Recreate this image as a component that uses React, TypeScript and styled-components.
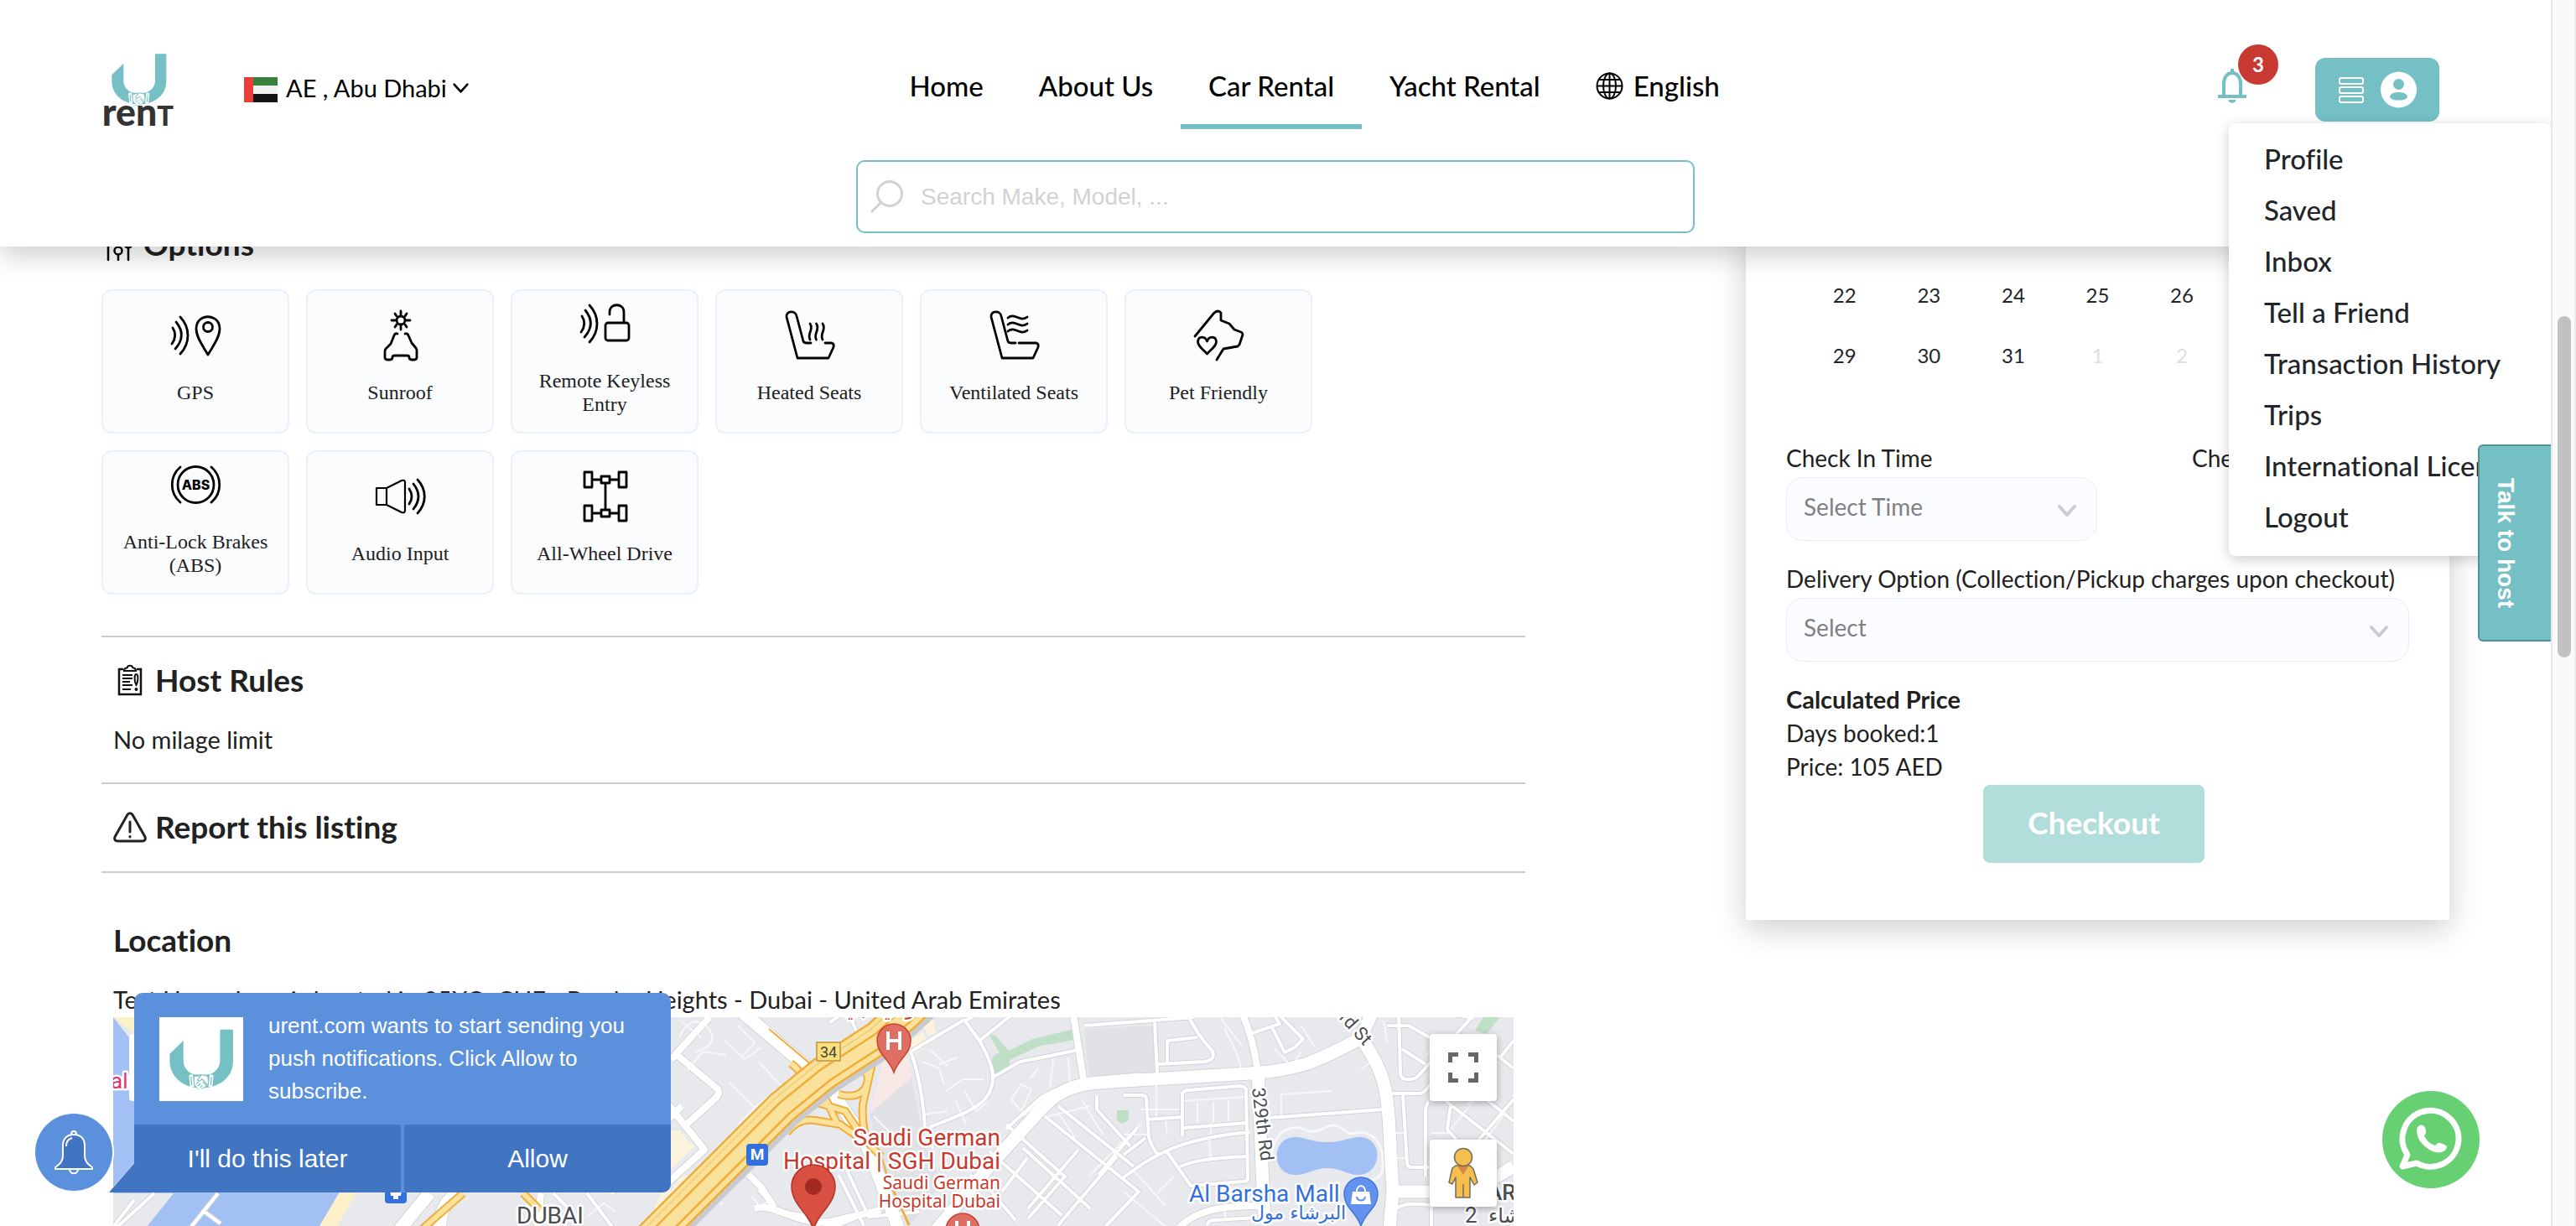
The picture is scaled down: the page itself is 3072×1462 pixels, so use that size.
import React from "react";
import styled, { createGlobalStyle, css } from "styled-components";

const teal = "#74c0c4";
const brandFont = `Lato, "Noto Sans", sans-serif`;
const plainFont = `"Liberation Sans", Arial, sans-serif`;

const GlobalStyle = createGlobalStyle`
  * { box-sizing: border-box; }
  body { margin: 0; background: #fff; color: #212121; font-family: ${brandFont}; font-variant-ligatures: none; }
  button, input, select { font: inherit; color: inherit; margin: 0; }
  h2, p, ul, table { margin: 0; padding: 0; }
  svg { display: block; }
`;

/* ---------- frame ---------- */

const Frame = styled.div`
  display: grid;
  grid-template-columns: minmax(0, 1fr) 30px;
  height: 100vh;
  overflow: hidden;
`;

const Page = styled.div`
  position: relative;
  overflow: hidden;
`;

const ScrollTrack = styled.div`
  background: #fafafa;
  border-left: 2px solid #e8e8e8;
  border-right: 2px solid #ececec;
  padding: 377px 4px 0 6px;
`;

const ScrollThumb = styled.div`
  height: 407px;
  border-radius: 8px;
  background: #c1c1c1;
`;

/* ---------- header ---------- */

const Header = styled.header`
  position: absolute;
  inset: 0 0 auto 0;
  z-index: 2;
  padding: 60px 133px 16px 123px;
  background: #fff;
  box-shadow: 0 10px 30px rgba(0, 0, 0, 0.2);
`;

const HeaderRow = styled.div`
  display: grid;
  grid-template-columns: 9fr auto 8fr;
  align-items: center;
  height: 94px;
`;

const Brand = styled.div`
  display: flex;
  align-items: center;
  gap: 82px;
`;

const BrandLink = styled.a`
  display: block;
  svg { overflow: visible; }
`;

const PlaceButton = styled.button`
  display: flex;
  align-items: center;
  gap: 10px;
  padding: 0;
  border: 0;
  background: none;
  color: #000;
  font-size: 29px;
  line-height: 40px;
`;

const Place = styled.span`
  display: flex;
  align-items: center;
  gap: 6px;
  padding-bottom: 4px;
`;

const Nav = styled.nav`
  display: flex;
`;

const NavLink = styled.a<{ $active?: boolean }>`
  display: flex;
  align-items: center;
  gap: 12px;
  height: 94px;
  padding: 0 33px 4px;
  border-bottom: 6px solid ${(p) => (p.$active ? teal : "transparent")};
  color: #000;
  font-size: 33px;
  font-weight: 500;
  text-decoration: none;
  white-space: nowrap;
`;

const Account = styled.div`
  display: flex;
  align-items: center;
  justify-content: flex-end;
  gap: 82px;
`;

const BellButton = styled.button`
  position: relative;
  margin-bottom: 10px;
  padding: 0;
  border: 0;
  background: none;
`;

const Count = styled.span`
  position: absolute;
  left: 24px;
  top: -28px;
  width: 48px;
  height: 48px;
  border-radius: 50%;
  background: #c83a31;
  color: #fff;
  font-size: 24px;
  font-weight: 700;
  line-height: 48px;
  text-align: center;
`;

const AccountButton = styled.button`
  display: flex;
  align-items: center;
  justify-content: center;
  gap: 20px;
  width: 148px;
  height: 76px;
  border: 0;
  border-radius: 12px;
  background: ${teal};
`;

const SearchBox = styled.form`
  display: flex;
  align-items: center;
  gap: 18px;
  width: 1000px;
  height: 87px;
  margin: 37px 0 0 898px;
  padding: 0 14px;
  border: 2px solid ${teal};
  border-radius: 10px;
  font-family: ${plainFont};
`;

const SearchInput = styled.input`
  flex: 1;
  border: 0;
  outline: 0;
  background: none;
  font-size: 28px;
  line-height: 40px;
  &::placeholder { color: #d2d2d2; opacity: 1; }
`;

const Menu = styled.ul`
  position: absolute;
  top: 147px;
  right: 0;
  width: 384px;
  padding: 12px 0 16px;
  border-radius: 8px;
  background: #fff;
  box-shadow: 0 4px 16px rgba(0, 0, 0, 0.2);
  list-style: none;
`;

const MenuLink = styled.a`
  display: block;
  padding: 0 42px;
  color: #212529;
  font-size: 33px;
  font-weight: 500;
  line-height: 61px;
  text-decoration: none;
  white-space: nowrap;
`;

/* ---------- content ---------- */

const Main = styled.main`
  display: grid;
  grid-template-columns: minmax(0, 1698fr) minmax(0, 839fr);
  column-gap: 263px;
  align-items: start;
  padding: 269px 121px 0;
`;

const Heading = styled.h2`
  display: flex;
  align-items: center;
  gap: 10px;
  font-size: 37px;
  font-weight: 700;
  line-height: 44px;
`;

const OptionGrid = styled.ul`
  display: grid;
  grid-template-columns: repeat(6, 224px);
  grid-auto-rows: 172px;
  gap: 20px;
  margin: 32px 0 49px;
  list-style: none;
`;

const OptionCard = styled.li`
  display: flex;
  flex-direction: column;
  align-items: center;
  justify-content: center;
  gap: 24px;
  padding: 0 20px 10px;
  border: 2px solid #eceffe;
  border-radius: 12px;
  background: #fbfcfe;
  font-family: "Liberation Serif", "Times New Roman", serif;
  font-size: 24px;
  line-height: 28px;
  text-align: center;
`;

const OptionIcon = styled.svg`
  flex: none;
  width: 60px;
  height: 60px;
  overflow: visible;
`;

const Section = styled.section<{ $last?: boolean }>`
  padding: ${(p) => (p.$last ? "58px" : "29px")} 14px 31px;
  border-top: 2px solid #ccc;
`;

const Text = styled.p`
  margin-top: 29px;
  font-size: 29px;
  line-height: 40px;
`;

const MapBox = styled.div`
  position: relative;
  height: 400px;
  margin-top: 1px;
  overflow: hidden;
  background: #e8e9ed;
`;

const MapControls = styled.div`
  position: absolute;
  top: 20px;
  right: 20px;
  display: grid;
  gap: 46px;
`;

const MapButton = styled.button`
  display: grid;
  place-items: center;
  width: 80px;
  height: 80px;
  padding: 0;
  border: 0;
  border-radius: 4px;
  background: #fff;
  box-shadow: 0 2px 8px rgba(0, 0, 0, 0.3);
`;

/* ---------- booking ---------- */

const Booking = styled.aside`
  padding: 46px 48px 68px;
  background: #fff;
  box-shadow: 0 10px 36px rgba(0, 0, 0, 0.2);
`;

const Calendar = styled.table`
  width: 704px;
  margin: 0 auto;
  border-collapse: collapse;
  table-layout: fixed;
  color: #212529;
  font-size: 24px;
`;

const Day = styled.td<{ $muted?: boolean }>`
  height: 72px;
  padding: 0;
  text-align: center;
  ${(p) => p.$muted && css`color: #dadfe3;`}
`;

const TimeRow = styled.div`
  display: grid;
  grid-template-columns: 371px 1fr;
  column-gap: 113px;
  margin-top: 67px;
`;

const Field = styled.div`
  display: grid;
  gap: 3px;
  font-size: 28px;
`;

const DeliveryField = styled(Field)`
  margin-top: 25px;
`;

const Label = styled.label`
  line-height: 40px;
  white-space: nowrap;
`;

const SelectWrap = styled.div`
  position: relative;
  svg { position: absolute; right: 24px; top: 32px; pointer-events: none; }
`;

const Select = styled.select`
  display: block;
  width: 100%;
  height: 76px;
  padding: 0 20px 6px;
  appearance: none;
  border: 1px solid #e9ecfb;
  border-radius: 20px;
  background: #fbfcff;
  color: #808080;
`;

const Price = styled.div`
  margin-top: 25px;
  font-size: 28px;
  line-height: 40px;
`;

const PriceTitle = styled.strong`
  font-size: 29px;
`;

const Checkout = styled.button`
  display: block;
  width: 264px;
  height: 93px;
  margin: 2px 0 0 235px;
  padding: 0 0 4px;
  border: 0;
  border-radius: 8px;
  background: #b1dedb;
  color: #fff;
  font-size: 37px;
  font-weight: 700;
`;

/* ---------- floating parts ---------- */

const TalkButton = styled.button`
  position: absolute;
  z-index: 3;
  top: 530px;
  right: 0;
  width: 87px;
  height: 235px;
  padding: 0 24px 0 0;
  border: 2px solid #4c9496;
  border-right: 0;
  border-radius: 6px 0 0 6px;
  background: ${teal};
  color: #fff;
  font-family: ${plainFont};
  font-size: 28px;
  font-weight: 700;
  writing-mode: vertical-rl;
  text-align: center;
`;

const WhatsApp = styled.a`
  position: absolute;
  z-index: 3;
  right: 85px;
  bottom: 45px;
`;

const PushBell = styled.button`
  position: absolute;
  z-index: 3;
  left: 42px;
  bottom: 42px;
  width: 92px;
  height: 92px;
  display: grid;
  place-items: center;
  padding: 0;
  border: 0;
  border-radius: 50%;
  background: #5b90dc;
  box-shadow: 0 0 0 2px #fff;
`;

const Push = styled.div`
  position: absolute;
  z-index: 3;
  left: 160px;
  bottom: 40px;
  width: 640px;
  border-radius: 10px 10px 10px 0;
  background: #5b90dc;
  color: #fff;
  font-family: ${plainFont};
`;

const PushTail = styled.svg`
  position: absolute;
  left: -30px;
  bottom: 0;
`;

const PushBody = styled.div`
  display: flex;
  gap: 30px;
  height: 157px;
  padding: 20px 30px 0;
  font-size: 26px;
  line-height: 39px;
`;

const PushLogo = styled.div`
  display: grid;
  place-items: center;
  flex: none;
  width: 100px;
  height: 100px;
  margin-top: 9px;
  background: #fff;
`;

const PushActions = styled.div`
  display: grid;
  grid-template-columns: 1fr 1fr;
  gap: 4px;
`;

const PushAction = styled.button<{ $end?: boolean }>`
  height: 81px;
  padding: 0;
  border: 0;
  border-radius: ${(p) => (p.$end ? "4px 0 10px 4px" : "0 4px 4px 0")};
  background: #4175c1;
  font-size: 30px;
`;

/* ---------- drawings ---------- */

const UMark = () => (
  <g>
    <path
      fill={teal}
      d="M97 62 L55 103 V125 C55 175 98 208 152 208 C208 208 250 175 250 125 V28 H210 V122 C210 146 194 163 172 167 H134 C112 163 97 146 97 122Z"
    />
    <path fill="#fff" d="M114 168l12-2 4 38-12 3zM190 168l-12-2-4 38 12 3z" />
    <path fill={teal} d="M119 173l3 0 2 26-3 1zM185 173l-3 0-2 26 3 1z" />
    <path
      fill="#fff"
      stroke={teal}
      strokeWidth="2"
      d="M130 172l14-1 8-4 20 5 2 26-8 4-4 5-6 1-8 6-8-5-10-14z"
    />
    <path
      fill="none"
      stroke={teal}
      strokeWidth="3"
      strokeLinecap="round"
      d="M152 168l-12 16c5 4 10 2 14-4l18 18M138 194l6-5M142 201l7-7M149 206l6-6M158 190l10 10"
    />
  </g>
);

const Logo = () => (
  <svg width="86" height="86" viewBox="24 27 258 258" role="img" aria-label="U rent">
    <UMark />
    <text x="20" y="284" fill="#333" fontFamily={brandFont} fontWeight="900" fontSize="134">
      ren<tspan fontSize="98">T</tspan>
    </text>
  </svg>
);

const Flag = () => (
  <svg width="40" height="30" viewBox="0 0 40 30">
    <path fill="#37803c" d="M0 0h40v10H0z" />
    <path fill="#f2f2f2" d="M0 10h40v10H0z" />
    <path fill="#141414" d="M0 20h40v10H0z" />
    <path fill="#ed3d38" d="M0 0h11v30H0z" />
  </svg>
);

const Chevron = ({ size, color, weight }: { size: number; color: string; weight: number }) => (
  <svg width={size} height={(size * 2) / 3} viewBox="0 0 24 16" fill="none" stroke={color} strokeWidth={weight} strokeLinecap="round" strokeLinejoin="round">
    <path d="M3 3l9 10 9-10" />
  </svg>
);

const Globe = () => (
  <svg width="33" height="33" viewBox="0 0 33 33" fill="none" stroke="#000" strokeWidth="2">
    <circle cx="16.500" cy="16.500" r="15" />
    <ellipse cx="16.500" cy="16.500" rx="7.500" ry="15" />
    <path d="M16.500 1.500v30M1.500 16.500h30M3.500 9h26M3.500 24h26" />
  </svg>
);

const Bell = () => (
  <svg width="34" height="42" viewBox="0 0 34 42" fill="none" stroke={teal} strokeWidth="4">
    <path d="M7 33V19C7 11 11 6 17 6s10 5 10 13v14" />
    <path d="M0 34h34M17 6V1" strokeWidth="4" />
    <path d="M12.500 38h9c0 5-9 5-9 0z" fill={teal} stroke="none" />
  </svg>
);

const Bars = () => (
  <svg width="30" height="32" viewBox="0 0 30 32" fill="none" stroke="#fff" strokeWidth="2">
    <rect x="1" y="2" width="28" height="7" rx="2" />
    <rect x="1" y="13" width="28" height="7" rx="2" />
    <rect x="1" y="24" width="28" height="7" rx="2" />
  </svg>
);

const Person = () => (
  <svg width="43" height="44" viewBox="0 0 43 44">
    <circle cx="21.500" cy="22" r="21.500" fill="#fff" />
    <circle cx="21.500" cy="15.500" r="6.500" fill={teal} />
    <path fill={teal} d="M11 31c0-4 5-6 10.500-6S32 27 32 31c-2 3-6 3.500-10.500 3.500S13 34 11 31z" />
  </svg>
);

const Lens = () => (
  <svg width="41" height="41" viewBox="0 0 41 41" fill="none" stroke="#d2d2d2" strokeWidth="3" strokeLinecap="round">
    <circle cx="24" cy="17" r="14.500" />
    <path d="M13 28L3 38" />
  </svg>
);

const Sliders = () => (
  <svg width="40" height="40" viewBox="0 0 40 40" fill="none" stroke="#000" strokeWidth="2.500" strokeLinecap="round">
    <path d="M8 20v19M8 2v8M20 33v6M20 2v20M32 25v14M32 2v10" />
    <circle cx="8" cy="15" r="4.500" />
    <circle cx="20" cy="28" r="4.500" />
    <circle cx="32" cy="20" r="4.500" />
  </svg>
);

const Clipboard = () => (
  <svg width="40" height="40" viewBox="0 0 40 40" fill="none" stroke="#111" strokeWidth="2.500">
    <path d="M12 7H7v30h26V7h-5" />
    <path d="M13 9c0-4 3-3 4-4 0-3 6-3 6 0 1 1 4 0 4 4z" strokeWidth="2" />
    <path d="M11 14h12M11 18h12M11 22h9M11 26h12M11 31h10" strokeWidth="2" />
    <path d="M27.500 13c-3 0-2 10 0 13 2-3 3-13 0-13z" strokeWidth="2" />
    <circle cx="27.500" cy="31" r="2" fill="#111" stroke="none" />
  </svg>
);

const Warning = () => (
  <svg width="40" height="40" viewBox="0 0 40 40" fill="none" stroke="#222" strokeWidth="3" strokeLinecap="round" strokeLinejoin="round">
    <path d="M17 5.500c1.500-2.500 4.500-2.500 6 0L38 32c1 3-.5 5-3 5H5c-2.500 0-4-2-3-5z" />
    <path d="M20 14v12M20 31.500v.5" />
  </svg>
);

const Icon60 = ({ children }: { children: React.ReactNode }) => (
  <OptionIcon viewBox="0 0 60 60" fill="none" stroke="#000" strokeWidth="2.800" strokeLinecap="round" strokeLinejoin="round">
    {children}
  </OptionIcon>
);

const leftWaves = (
  <path d="M3 21c4 6 4 12-1 19M7 14c9 11 8 22 -1 32M12 8c12 13 12 31 0 44" />
);
const seatBack = "M49 39h8q3 1 2 5L53 57H16L3 8C2 0 14 0 15 7l8 30q1 2 4 2h5";

const options: { label: string; art: React.ReactNode }[] = [
  {
    label: "GPS",
    art: (
      <>
        {leftWaves}
        <path d="M45 53C40 44 31 33 31 22c0-19 28-19 28 0 0 11-9 22-14 31z" />
        <circle cx="45" cy="20" r="5.500" />
      </>
    ),
  },
  {
    label: "Sunroof",
    art: (
      <>
        <circle cx="31" cy="12" r="5" />
        <path d="M31 1v4M31 19v4M20 12h4M38 12h4M24 4l2 3M38 4l-2 3M24 20l2-3M38 20l-2-3" />
        <path d="M27 28q-3-1-4 2l-4 10-6 6q-1 1-1 3v7q0 3 3 3h3q3 0 3-3 0-2 3-2h14q3 0 3 2 0 3 3 3h3q3 0 3-3v-8q0-2-1-3l-5-6-4-9q-1-3-4-2" />
      </>
    ),
  },
  {
    label: "Remote Keyless Entry",
    art: (
      <>
        {leftWaves}
        <rect x="31" y="29" width="28" height="21" rx="3" />
        <path d="M53 28V16c0-11-17-11-17 0v3" />
      </>
    ),
  },
  {
    label: "Heated Seats",
    art: (
      <>
        <path d={seatBack} />
        <path d="M31 16c5 7-4 12 0 19M38.500 16c5 7-4 12 0 19M46 16c5 7-4 12 0 19" />
      </>
    ),
  },
  {
    label: "Ventilated Seats",
    art: (
      <>
        <path d={seatBack + "M36 39h14"} />
        <path d="M23 9c8-7 15 6 23-1M23 17c8-7 15 6 23-1M23 25c8-7 15 6 23-1" />
      </>
    ),
  },
  {
    label: "Pet Friendly",
    art: (
      <>
        <path d="M2 31L25 3q5-4 8 0v9l10 4 6 7 8 3q2 1 2 3l-4 12-2 2-17 3-8 13" />
        <path d="M16.500 52C11 46 5 42 5.500 37c1-7 9-6 11 0 2-6 10-7 11 0 .5 5-5.500 9-11 15z" />
      </>
    ),
  },
  {
    label: "Anti-Lock Brakes (ABS)",
    art: (
      <>
        <circle cx="30.500" cy="30" r="21.500" />
        <path d="M12 9C-1 20-1 40 12 51M49 9c13 11 13 31 0 42" />
        <text x="30.500" y="36" fill="#000" stroke="none" fontFamily="Inter, sans-serif" fontSize="16" fontWeight="800" textAnchor="middle">ABS</text>
      </>
    ),
  },
  {
    label: "Audio Input",
    art: (
      <>
        <path d="M2 20h12v20H2zM14 20l18-9q4-1 4 2v34q0 3-4 2l-18-9" strokeWidth="2.200" />
        <path d="M41 21c4 6 4 12 0 18M46 15c8 10 8 20 0 30M51 10c11 12 11 28 0 40" />
      </>
    ),
  },
  {
    label: "All-Wheel Drive",
    art: (
      <>
        <path d="M6 1h9v18H6zM47 1h9v18h-9zM6 41h9v18H6zM47 41h9v18h-9zM26 6h10v8H26zM26 46h10v8H26zM15 10h11M36 10h11M15 50h11M36 50h11M31 14v32" />
      </>
    ),
  },
];

/* Street geometry, in map units whose origin lies outside the visible part. */
const streets: { width: number; d: string }[] = [
  {
    width: 2,
    d: "M1360 1322h46M1379 1293v37M1410 1312l76-5M1428 1313v25M1447 1313v25M1465 1311v25M1444 1338v14M1442 1357l2 24M1390 1335l2 18M1340 1352l30 0M1528 1330v-26l60-4M1455 1212l26 34M1460 1225l14 28 8 26M1552 1222l16 26M1520 1250l20 20 12-16M1623 1275l14-12M1650 1216l4 26M1706 1350h24M1665 1380h11M1664 1350h10M820 1275l18-22 28 4M812 1216l24 20M864 1240l24 22 20-14M870 1290l30 30 26-22M880 1340l22-22M905 1265l40 44M1062 1350l-20-20M1100 1265l20 8 6 20M1108 1250l22 20M1120 1268l22-8M1102 1328l28-4M1128 1300l20-14 26 0M1150 1300l14 24 14-12M1140 1312l12 28M1206 1310l12-18 12 6-12 26zM1256 1262l-4 34M1274 1260l2 30M1228 1285l10-12M1220 1330l24-20M1262 1326l20 30M1290 1310l14 24 12 18M1300 1400l60-60M1250 1330l50-12M1380 1422l20-20M1340 1420l60 50M1352 1395l38 42M1460 1440l2 14M1560 1424l22-8 12 14M1700 1258l26-26M1750 1316l30-30M1730 1346l40-50M1760 1375l35-50M700 1450l20-16 14 10M830 1440l20-16 12 12M896 1425l10 12 16-8M810 1236q14-30 34-12 16 20-16 30M900 1216l30 30M880 1222l20 20-14 16",
  },
  {
    width: 4,
    d: "M1086 1253c8 20 16 60 17 94l10 22M1086 1253l64-38 18 25c8 14 16 30 16 43 0 34-30 42-75 60M1150 1217l14-8M1168 1240l40-32M1184 1283c20-8 28-20 44-20l58-12M1293 1222l67-5 64-5M1377 1218l3 62M1380 1268l56-3q14-2 10-12l-16-20-12-20M1392 1268v-28l36-4M1410 1353v-50q2-4 8-4l60-5q8 0 8 6l2 104q0 4-6 4l-62 5-30-43M1412 1344l75-6M1340 1305h22q5 0 5 5l3 45q4 14 12 22M1368 1334l42-3M1340 1403c30-22 60-46 150-54M1340 1376l26-20M1407 1390c20-8 40-10 80-12M1490 1232l36-12-18-30M1516 1222l16 32 12-6 10-10-30-30M1512 1332l138-10M1668 1205l2 74q1 7 7 7h6q5 0 10-6l64-70M1654 1222h26l28 16M1672 1250l28 18M1660 1303h32q5 0 9-5l18-22M1673 1304l5 82q0 5 6 5h22M1703 1312l-3 10v80M1730 1316l-4 30 18 20M1723 1311l82 64M1760 1300l45 36M1785 1257l20 16M1805 1310l-50 58M1805 1240l-16 20M1757 1213l-50-10M1665 1440c10-6 20-6 42-4v26M1440 1460q0-6 8-6l50-3M780 1462l112-64M905 1418l24 26 30 4 20 16M1200 1340l70 62-44 50M1220 1368l80 72M1246 1330l112 90-40 42M1262 1318l90 72M1180 1372l86 76M1195 1420l30-40M1226 1440l60-70M1262 1460l70-82M1310 1400l46-56M1200 1345l40-36c20-14 40-16 60-18l60 0M1308 1306v16l40 44M1157 1400l20 14 34 40M1000 1400l30 60M1008 1390l28 60 60-6M160 1430l-25 32M184 1422l-44 40M260 1422l-32 40M241 1442l22 16M700 1422l30 40M660 1422l20 20-8 24M990 1218l20-14 12 26",
  },
  {
    width: 8,
    d: "M846 1212l-40 44 48 40q6 5 0 12l-40 36M800 1262l8-6M792 1310l48 60-50 45M1480 1205c10 20 16 44 20 72M1293 1292l-14-90M1407 1462c20-20 50-26 104-25M645 1422l-4 40M728 1422l60-80 25-24M1020 1450c-14 4-22 10-36 14M900 1440c20-8 50 20 90 16l60-14M893 1400l14 14 16 24",
  },
  {
    width: 15,
    d: "M884 1205l92 78M988 1295l44 65 40 105M1360 1286l-60 5c-24 4-38 10-56 28l-60 66-70 84M1340 1288l150-9c60-4 80-14 133-42l14-32M1623 1237c26 36 32 60 34 110l4 73-4 46M1500 1277l8 180M1662 1420h56c36-4 60-12 87-30M512 1422l-36 44M546 1420c-16 14-20 20-22 46",
  },
];

const PlacePin = ({ x, y, fill, edge, children }: { x: number; y: number; fill: string; edge: string; children: React.ReactNode }) => (
  <g transform={`translate(${x} ${y})`}>
    <path d="M0 38C-5 22-20 16-20 0a20 20 0 0 1 40 0C20 16 5 22 0 38z" fill={fill} stroke={edge} strokeWidth="1.500" />
    {children}
  </g>
);

const ramps =
  "M943 1267q20 14 14 34M1043 1254l-14 62q-2 30 8 48l14 14M1026 1272q14 8 6 24-8 14-32 8M968 1312l40 12 16 24M984 1308l14 30M938 1350q14-18 34-15l30 5 20 14M552 1422l-50 44M624 1422l20 20";

const CityMap = () => (
  <svg width="1670" height="400" viewBox="135 1212 1670 400" fontFamily={`Roboto, "Noto Sans", sans-serif`}>
    <path fill="#fbf0c8" d="M135 1212h26v20z" />
    <path fill="#a3c0f5" d="M135 1212l25 32v100h300l-56 78-26 50H167l40-50h-72z" />
    <path fill="#fbf0c8" d="M404 1422h20l-24 44h-22z" />
    <path fill="#e8e9ed" d="M135 1422h72l-40 44h-32z" />
    <path fill="#e1e2e6" d="M1293 1226l84-4 2 58-72 4q-8 0-9-8zM1087 1283l12 66 24 60-40 54-30-70-16-66z" />
    <path fill="#f8e9e7" d="M1053 1263l28-7 6 28-49 42z" />
    <path fill="#fdf3dc" d="M1096 1216l16-6 4 22-8 2zM1086 1240l14-10 8 14-18 12zM800 1347h10l18 20-28 26zM800 1420l14-22 8 6-22 38zM794 1345l-6 30 6 20zM780 1440l20-40v40z" />
    <path fill="#bfdfc7" d="M1179 1233l8 1 16 18 28-14 51-12v13l-42 7-36 17-1 14-11 5q-10-6-10-16 1-9 10-12zM1332 1323h14v12l-8 4-6-4zM1770 1210h20l-17 22-14-4z" />
    <path fill="#a3c0f5" d="M1545 1355c12 0 18 6 38 6s26-6 38-6c30 0 28 45-2 45-12 0-20-8-36-8s-24 8-38 8c-30 0-30-45 0-45z" />
    <path fill="none" stroke="#f6f7f8" strokeWidth="3" d="M1518 1380c-4-30 24-44 42-32 16 2 20-8 32-7 16 4 10 14 30 8 24 2 30 26 26 48-4 8-12 10-16 8" />

    {streets.map((s) => (
      <path key={s.width} d={s.d} fill="none" stroke="#d3d4d9" strokeWidth={s.width > 2 ? s.width + 2 : 0} strokeLinejoin="round" />
    ))}
    {streets.map((s) => (
      <path key={s.width} d={s.d} fill="none" stroke={s.width > 2 ? "#fff" : "#f7f7f9"} strokeWidth={s.width} strokeLinejoin="round" />
    ))}

    <g fill="none">
      <path stroke="#efae3a" strokeWidth="10" d={ramps} />
      <path stroke="#fbe29c" strokeWidth="6" d={ramps} />
      <path stroke="#efae3a" strokeWidth="2" d="M917 1226l50 42q14 4 30-8M1051 1378l8 26" />
      <path stroke="#efae3a" strokeWidth="3" d="M1059 1404l25 56" />
      <path stroke="#c9cacf" strokeWidth="46" d="M1098 1196l-46 42-66 43-49 40-66 66-110 110" />
      <path stroke="#efae3a" strokeWidth="42" d="M1094 1194l-46 42-66 43-49 40-66 66-110 110" />
      <path stroke="#fbe29c" strokeWidth="37" d="M1094 1194l-46 42-66 43-49 40-66 66-110 110" />
      <path stroke="#efae3a" strokeWidth="2.500" d="M1090 1190l-46 42-66 43-49 40-66 66-110 110M1102 1202l-46 42-66 43-49 40-66 66-110 110" />
      <path stroke="#f3cf78" strokeWidth="2" d="M1084 1185l-46 42-66 43-49 40-66 66-110 110" />
    </g>

    <g stroke="#fff" strokeWidth="5" strokeLinejoin="round" paintOrder="stroke">
      <g fill="#c9382c" fontSize="28" textAnchor="end">
        <text x="1193" y="1365">Saudi German</text>
        <text x="1193" y="1393">Hospital | SGH Dubai</text>
        <g fontSize="21" fontFamily={`"Noto Sans", sans-serif`}>
          <text x="1193" y="1417">Saudi German</text>
          <text x="1193" y="1439">Hospital Dubai</text>
          <text x="1139" y="1209" fontSize="24">السعودي دبي</text>
        </g>
      </g>
      <g fill="#3370dd">
        <text x="1418" y="1432" fontSize="28">Al Barsha Mall</text>
        <text x="1492" y="1453" fontSize="22" fontFamily={`"DejaVu Sans", sans-serif`}>البرشاء مول</text>
      </g>
      <g fill="#4a4d52">
        <text x="616" y="1458" fontSize="28">DUBAI</text>
        <text transform="translate(1493 1297) rotate(83)" fontSize="22">329th Rd</text>
        <text transform="translate(1588 1204) rotate(48)" fontSize="22">3rd St</text>
        <text x="1774" y="1430" fontSize="26" fontWeight="500">AR</text>
        <text x="1747" y="1457" fontSize="26">2</text>
        <text x="1775" y="1457" fontSize="24" fontFamily={`"DejaVu Sans", sans-serif`}>شاء</text>
      </g>
      <text x="132" y="1297" fill="#dd3472" fontSize="26">alm</text>
    </g>

    <rect x="974" y="1242" width="28" height="22" fill="#fbe07a" stroke="#c9a853" strokeWidth="2" />
    <text x="988" y="1260" fill="#444" fontSize="18" textAnchor="middle">34</text>
    <rect x="890" y="1363" width="26" height="26" rx="4" fill="#3370dd" />
    <text x="903" y="1382" fill="#fff" fontSize="19" fontWeight="700" textAnchor="middle">M</text>
    <rect x="459" y="1408" width="26" height="26" rx="4" fill="#3370dd" />
    <path fill="#fff" d="M465 1418h14l-1 7h-3v4h-6v-4h-3z" />

    <PlacePin x={1066} y={1240} fill="#df6e63" edge="#c83f33">
      <path stroke="#fff" strokeWidth="4" d="M-7-11v22M7-11v22M-7 0H7" />
    </PlacePin>
    <PlacePin x={1148} y={1466} fill="#df6e63" edge="#c83f33">
      <path stroke="#fff" strokeWidth="4" d="M-7-11v22M7-11v22M-7 0H7" />
    </PlacePin>
    <PlacePin x={1623} y={1423} fill="#6292ee" edge="#3f76dc">
      <path fill="#fff" d="M-10-3h20l2 15h-24z" />
      <path fill="none" stroke="#fff" strokeWidth="2" d="M-5-3c0-9 10-9 10 0" />
      <path fill="none" stroke="#6292ee" strokeWidth="2" d="M-5 3c1 6 9 6 10 0" />
    </PlacePin>
    <path fill="#d94f42" stroke="#b0342a" strokeWidth="1.500" d="M970 1466c-3-18-26-30-26-52a26 26 0 0 1 52 0c0 22-23 34-26 52z" />
    <circle cx="970" cy="1414" r="10" fill="#a32a21" />
    <rect x="154" y="1232" width="180" height="80" rx="4" fill="#fff" />
  </svg>
);

const Fullscreen = () => (
  <svg width="36" height="36" viewBox="0 0 36 36" fill="none" stroke="#666" strokeWidth="5">
    <path d="M2.500 12V2.500H12M24 2.500h9.500V12M33.500 24v9.500H24M12 33.500H2.500V24" />
  </svg>
);

const Pegman = () => (
  <svg width="36" height="62" viewBox="0 0 36 62" fill="#f5bf4f" stroke="#736a5a" strokeWidth="1.500" strokeLinejoin="round">
    <path d="M9 22h17l4 4 5 16-4 3-5-9v24H9V36l-4 8-4-2 4-17z" />
    <path d="M18 44v16" />
    <path d="M10 21h15l-7 12z" fill="#d8853f" stroke="none" />
    <circle cx="18" cy="12" r="10.500" />
  </svg>
);

const PushBellIcon = () => (
  <svg width="48" height="54" viewBox="0 0 48 54" fill="#4175c1" stroke="#fff" strokeWidth="2" strokeLinejoin="round">
    <path d="M21 5a3 3 0 0 1 6 0v2h-6zM19 47h10c0 7-10 7-10 0z" fill="none" />
    <path d="M24 6c9 0 13 6 13 13v12c0 8 5 11 9 14v2H2v-2c4-3 9-6 9-14V19c0-7 4-13 13-13z" />
    <path d="M15 20c0-6 3-9 7-10" fill="none" />
  </svg>
);

const WhatsAppIcon = () => (
  <svg width="116" height="116" viewBox="0 0 116 116">
    <circle cx="58" cy="58" r="58" fill="#67d073" />
    <path
      fill="none"
      stroke="#fff"
      strokeWidth="7"
      strokeLinejoin="round"
      d="M24 90l6-14a33.500 33.500 0 1 1 11 10z"
    />
    <path
      fill="#fff"
      d="M41 47c0-7 8-9 10-3 2 4 1 7-1 10 3 5 7 9 13 11 2-2 4-4 6-3 4 1 8 3 8 5-1 6-10 8-17 5-9-4-19-13-19-25z"
    />
  </svg>
);

/* ---------- page ---------- */

const menuItems = ["Profile", "Saved", "Inbox", "Tell a Friend", "Transaction History", "Trips", "International License", "Logout"];
const weeks = [
  ["22", "23", "24", "25", "26", "27", "28"],
  ["29", "30", "31", "1", "2", "3", "4"],
];

export default function App() {
  return (
    <Frame>
      <GlobalStyle />
      <Page>
        <Header>
          <HeaderRow>
            <Brand>
              <BrandLink href="#"><Logo /></BrandLink>
              <PlaceButton type="button">
                <Flag />
                <Place>AE , Abu Dhabi <Chevron size={21} color="#000" weight={3} /></Place>
              </PlaceButton>
            </Brand>
            <Nav>
              <NavLink href="#">Home</NavLink>
              <NavLink href="#">About Us</NavLink>
              <NavLink href="#" $active>Car Rental</NavLink>
              <NavLink href="#">Yacht Rental</NavLink>
              <NavLink href="#"><Globe />English</NavLink>
            </Nav>
            <Account>
              <BellButton type="button" aria-label="Notifications"><Bell /><Count>3</Count></BellButton>
              <AccountButton type="button" aria-label="Account"><Bars /><Person /></AccountButton>
            </Account>
          </HeaderRow>
          <SearchBox>
            <Lens />
            <SearchInput type="text" aria-label="Search" placeholder="Search Make, Model, ..." />
          </SearchBox>
          <Menu>
            {menuItems.map((item) => (
              <li key={item}><MenuLink href="#">{item}</MenuLink></li>
            ))}
          </Menu>
        </Header>

        <Main>
          <div>
            <Heading><Sliders />Options</Heading>
            <OptionGrid>
              {options.map((o) => (
                <OptionCard key={o.label}>
                  <Icon60>{o.art}</Icon60>
                  {o.label}
                </OptionCard>
              ))}
            </OptionGrid>
            <Section>
              <Heading><Clipboard />Host Rules</Heading>
              <Text>No milage limit</Text>
            </Section>
            <Section>
              <Heading><Warning />Report this listing</Heading>
            </Section>
            <Section $last>
              <Heading>Location</Heading>
              <Text>Test Urus - Luxe is located in 35XC+CHF - Barsha Heights - Dubai - United Arab Emirates</Text>
              <MapBox>
                <CityMap />
                <MapControls>
                  <MapButton type="button" aria-label="Toggle fullscreen view"><Fullscreen /></MapButton>
                  <MapButton type="button" aria-label="Street View"><Pegman /></MapButton>
                </MapControls>
              </MapBox>
            </Section>
          </div>

          <Booking>
            <Calendar>
              <tbody>
                {weeks.map((week, row) => (
                  <tr key={row}>
                    {week.map((day) => (
                      <Day key={day} $muted={day.length === 1}>{day}</Day>
                    ))}
                  </tr>
                ))}
              </tbody>
            </Calendar>
            <TimeRow>
              <Field>
                <Label htmlFor="check-in">Check In Time</Label>
                <SelectWrap>
                  <Select id="check-in"><option>Select Time</option></Select>
                  <Chevron size={24} color="#ccc" weight={4} />
                </SelectWrap>
              </Field>
              <Field>
                <Label as="span">Check Out Time</Label>
              </Field>
            </TimeRow>
            <DeliveryField>
              <Label htmlFor="delivery">Delivery Option (Collection/Pickup charges upon checkout)</Label>
              <SelectWrap>
                <Select id="delivery"><option>Select</option></Select>
                <Chevron size={24} color="#ccc" weight={4} />
              </SelectWrap>
            </DeliveryField>
            <Price>
              <PriceTitle>Calculated Price</PriceTitle>
              <div>Days booked:1</div>
              <div>Price: 105 AED</div>
            </Price>
            <Checkout type="button">Checkout</Checkout>
          </Booking>
        </Main>

        <TalkButton type="button">Talk to host</TalkButton>
        <WhatsApp href="#" aria-label="WhatsApp"><WhatsAppIcon /></WhatsApp>
        <PushBell type="button" aria-label="Subscribe"><PushBellIcon /></PushBell>
        <Push role="dialog" aria-label="Push notifications">
          <PushTail width="31" height="36" viewBox="0 0 31 36">
            <path fill="#4175c1" stroke="#fff" strokeWidth="2" d="M1 36L31 1" />
            <path fill="#4175c1" d="M0 36L31 0v36z" />
          </PushTail>
          <PushBody>
            <PushLogo>
              <svg width="78" height="72" viewBox="52 26 200 186"><UMark /></svg>
            </PushLogo>
            <p>urent.com wants to start sending you push notifications. Click Allow to subscribe.</p>
          </PushBody>
          <PushActions>
            <PushAction type="button">I'll do this later</PushAction>
            <PushAction type="button" $end>Allow</PushAction>
          </PushActions>
        </Push>
      </Page>
      <ScrollTrack><ScrollThumb /></ScrollTrack>
    </Frame>
  );
}
